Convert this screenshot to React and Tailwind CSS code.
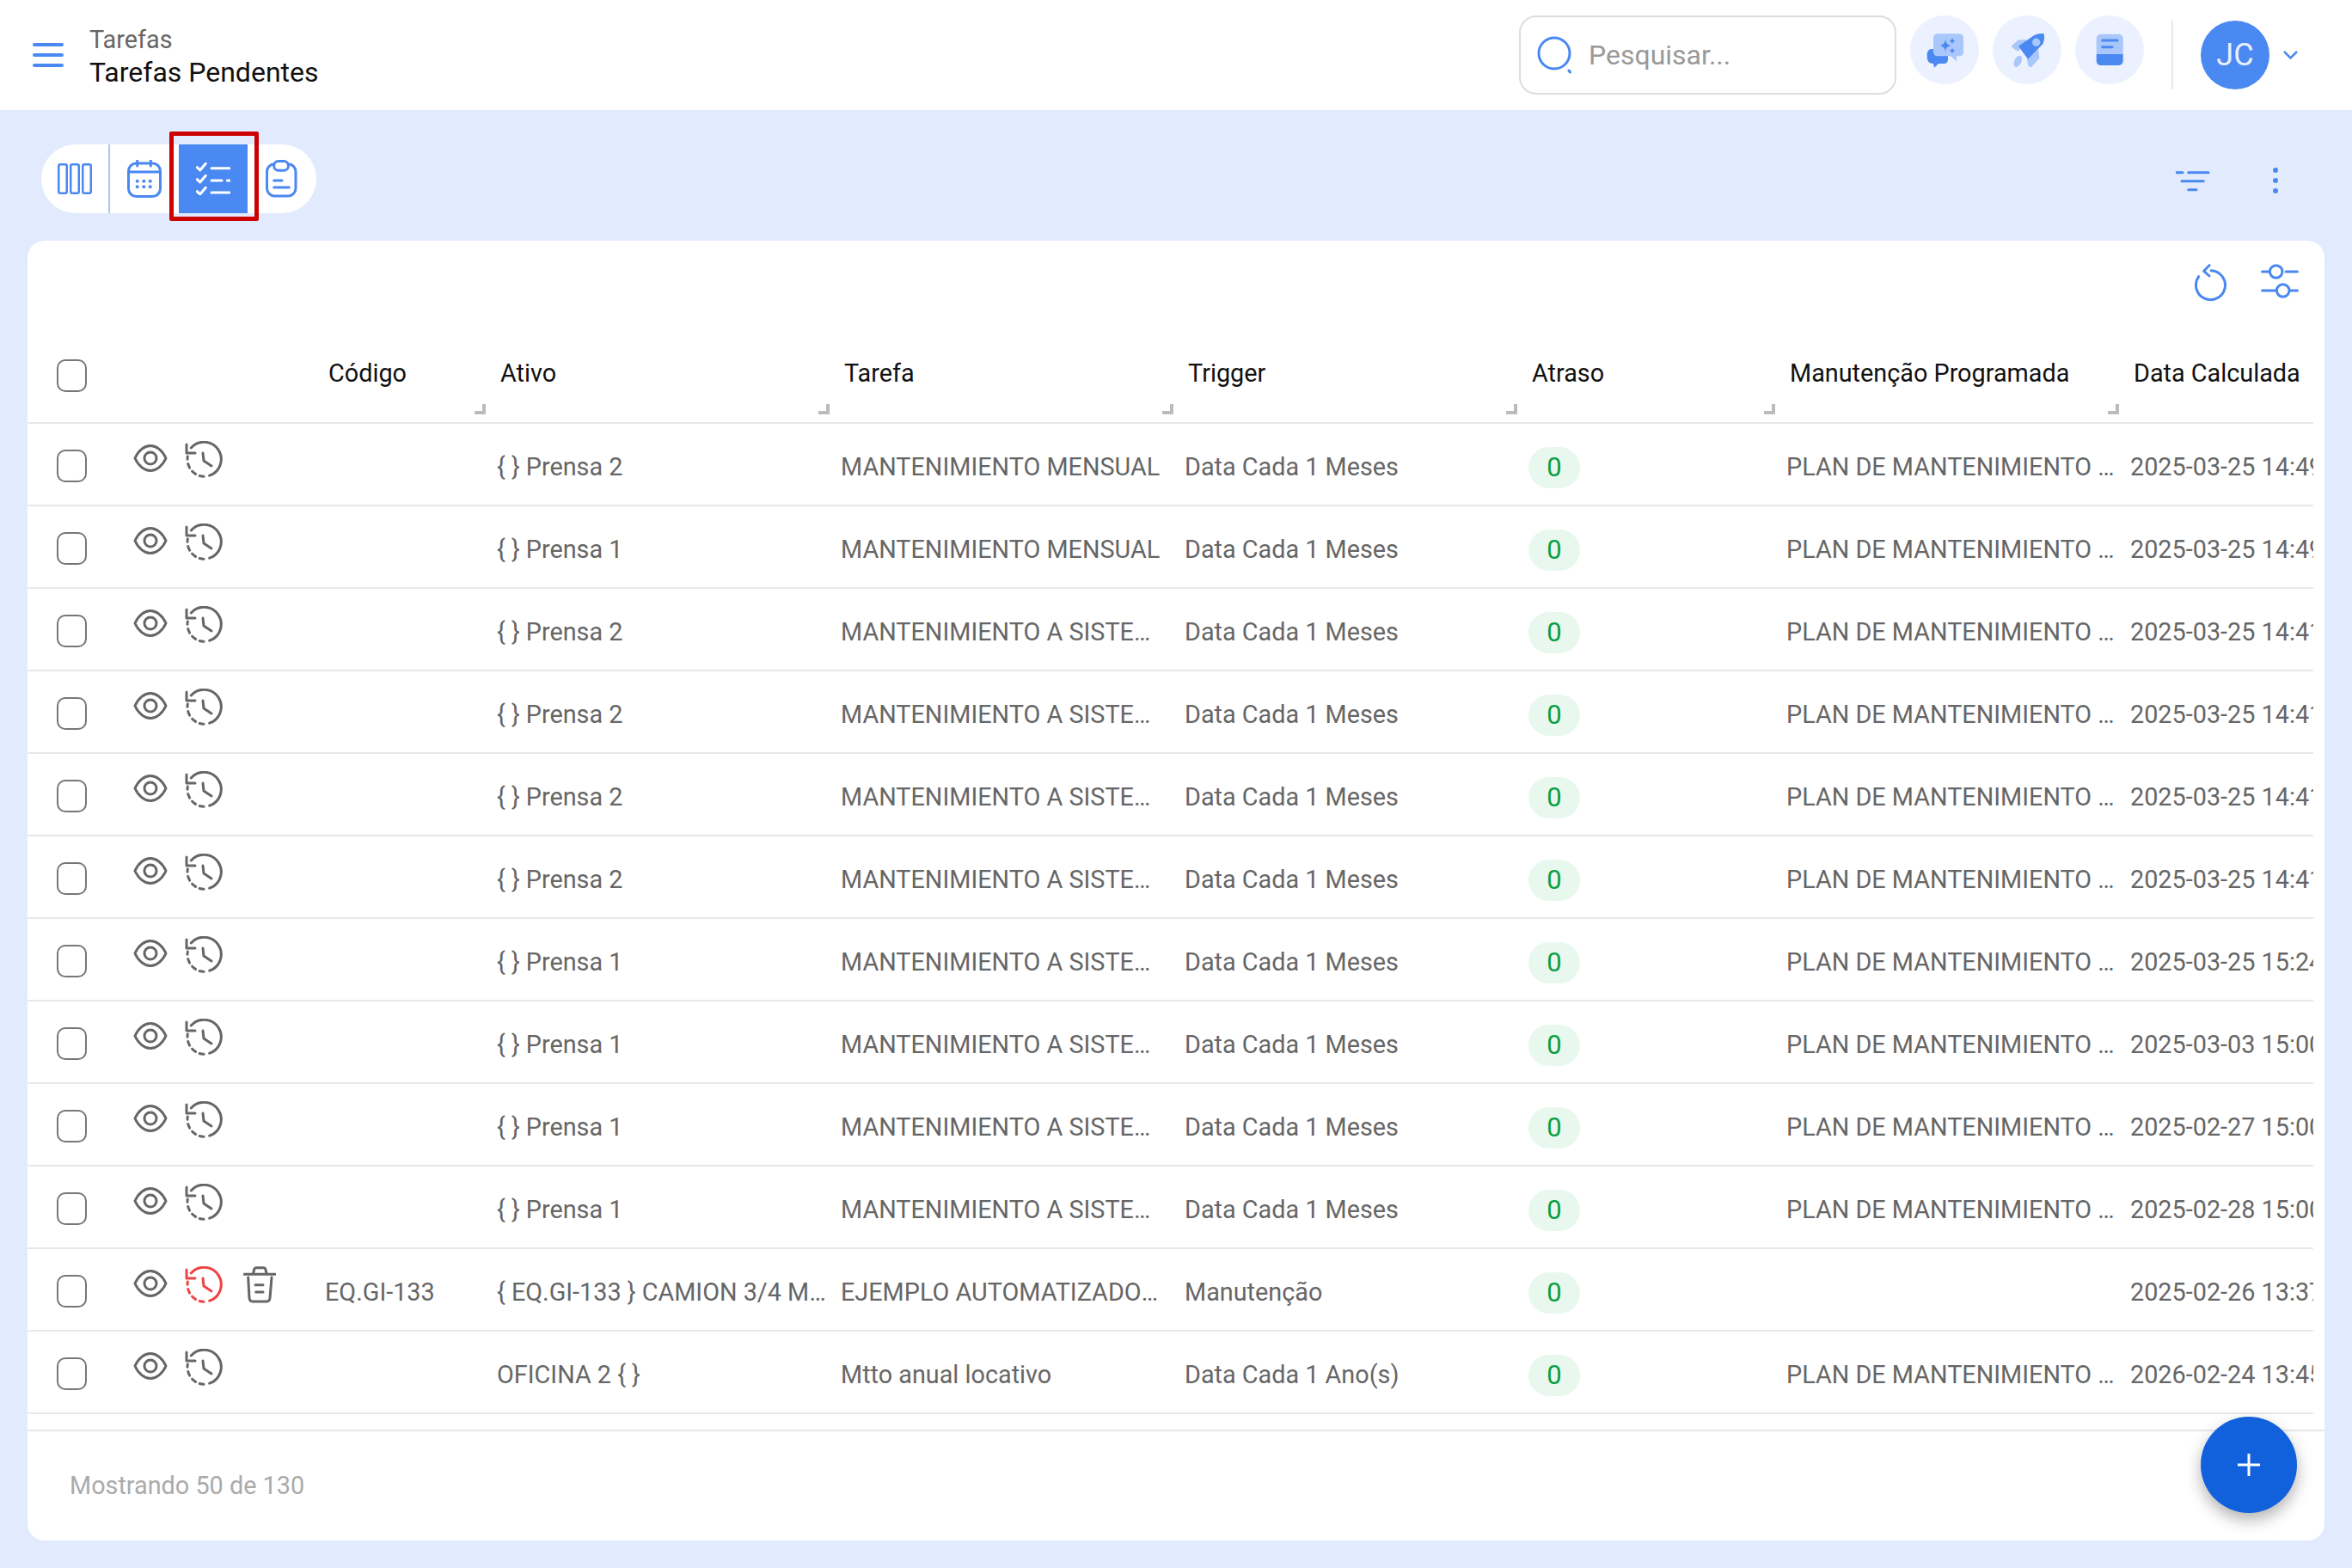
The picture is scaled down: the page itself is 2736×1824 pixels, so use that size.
import React from "react";

const rows = [
  { ativo: "{ } Prensa 2", tarefa: "MANTENIMIENTO MENSUAL", trigger: "Data Cada 1 Meses", plano: true, data: "2025-03-25 14:49:00" },
  { ativo: "{ } Prensa 1", tarefa: "MANTENIMIENTO MENSUAL", trigger: "Data Cada 1 Meses", plano: true, data: "2025-03-25 14:49:00" },
  { ativo: "{ } Prensa 2", tarefa: "MANTENIMIENTO A SISTEMA HIDRAULICO", trigger: "Data Cada 1 Meses", plano: true, data: "2025-03-25 14:41:00" },
  { ativo: "{ } Prensa 2", tarefa: "MANTENIMIENTO A SISTEMA HIDRAULICO", trigger: "Data Cada 1 Meses", plano: true, data: "2025-03-25 14:41:00" },
  { ativo: "{ } Prensa 2", tarefa: "MANTENIMIENTO A SISTEMA HIDRAULICO", trigger: "Data Cada 1 Meses", plano: true, data: "2025-03-25 14:41:00" },
  { ativo: "{ } Prensa 2", tarefa: "MANTENIMIENTO A SISTEMA HIDRAULICO", trigger: "Data Cada 1 Meses", plano: true, data: "2025-03-25 14:41:00" },
  { ativo: "{ } Prensa 1", tarefa: "MANTENIMIENTO A SISTEMA HIDRAULICO", trigger: "Data Cada 1 Meses", plano: true, data: "2025-03-25 15:24:00" },
  { ativo: "{ } Prensa 1", tarefa: "MANTENIMIENTO A SISTEMA HIDRAULICO", trigger: "Data Cada 1 Meses", plano: true, data: "2025-03-03 15:00:00" },
  { ativo: "{ } Prensa 1", tarefa: "MANTENIMIENTO A SISTEMA HIDRAULICO", trigger: "Data Cada 1 Meses", plano: true, data: "2025-02-27 15:00:00" },
  { ativo: "{ } Prensa 1", tarefa: "MANTENIMIENTO A SISTEMA HIDRAULICO", trigger: "Data Cada 1 Meses", plano: true, data: "2025-02-28 15:00:00" },
  { codigo: "EQ.GI-133", ativo: "{ EQ.GI-133 } CAMION 3/4 MARCA CHEVROLET", tarefa: "EJEMPLO AUTOMATIZADOS DE TAREAS", trigger: "Manutenção", plano: false, data: "2025-02-26 13:37:00", atrasada: true },
  { ativo: "OFICINA 2 { }", tarefa: "Mtto anual locativo", trigger: "Data Cada 1 Ano(s)", plano: true, data: "2026-02-24 13:45:00" },
];

const headers = [
  { label: "Código", w: "w-[200px]" },
  { label: "Ativo", w: "w-[400px]" },
  { label: "Tarefa", w: "w-[400px]" },
  { label: "Trigger", w: "w-[400px]" },
  { label: "Atraso", w: "w-[300px]" },
  { label: "Manutenção Programada", w: "w-[400px]" },
];

const MenuIcon = () => (
  <svg width="36" height="28" viewBox="0 0 36 28" fill="none" stroke="#4a88f2" strokeWidth="4" strokeLinecap="round">
    <path d="M2 2h32M2 14h32M2 26h32" />
  </svg>
);

const SearchIcon = () => (
  <svg width="44" height="44" viewBox="0 0 44 44" fill="none" stroke="#4a88f2" strokeWidth="3" strokeLinecap="round">
    <circle cx="20" cy="20" r="18" />
    <path d="M37 40l1.500 2" />
  </svg>
);

const ChatIcon = () => (
  <svg width="48" height="48" viewBox="0 0 48 48">
    <path d="M9 23h14c3 0 5 2 5 5v7c0 3-2 5-5 5h-6l-5 4.700-1-4.700C6 40 3.700 37 3.700 32v-3c0-3 2-6 5.300-6z" fill="#4a88f2" />
    <path d="M16 5.300h25c3 0 5 2 5 5v16c0 3-2 5-5 5h-3v5.700l-7-5.700H16c-3 0-5-2-5-5v-16c0-3 2-5 5-5z" fill="#a9c7fa" />
    <path d="M25 12c.8 4.500 2.500 6.200 7 7-4.500.8-6.200 2.500-7 7-.8-4.500-2.500-6.200-7-7 4.500-.8 6.200-2.500 7-7zM33 10c.4 2 1.500 3.100 3.500 3.700-2 .4-3.100 1.500-3.500 3.500-.4-2-1.500-3.100-3.500-3.500 2-.6 3.100-1.700 3.500-3.700zM33 21.500c.4 2 1.500 3.100 3.500 3.500-2 .4-3.100 1.500-3.500 3.500-.4-2-1.500-3.100-3.500-3.500 2-.4 3.100-1.500 3.500-3.500z" fill="#4a88f2" />
  </svg>
);

const RocketIcon = () => (
  <svg width="48" height="48" viewBox="0 0 48 48">
    <path d="M5.700 19.700 14 12.300h10L14 25.700c-3-1-6-3-8.300-6zM24 34.700l13.300-11.700 1 10.700L29 44c-2 .7-3.500-1-4-2.700z" fill="#a9c7fa" />
    <ellipse cx="13.300" cy="37.300" rx="4" ry="7" transform="rotate(25 13.300 37.300)" fill="#a9c7fa" />
    <path d="M32.300 7C37 5 41 4.800 43.500 5.200c1.200 4 .5 8-1.200 12.100L25 34.700 14 19.700z" fill="#4a88f2" />
    <circle cx="34.700" cy="15.300" r="4.700" fill="#a9c7fa" />
  </svg>
);

const BookIcon = () => (
  <svg width="48" height="48" viewBox="0 0 48 48">
    <path d="M14 5.700h20.500c3 0 5.200 2.200 5.200 5.200V29H8.700V11c0-3 2.300-5.300 5.300-5.300z" fill="#a9c7fa" />
    <path d="M8.700 29h31v7.800c0 3-2.200 5.200-5.200 5.200H14c-3 0-5.300-2.300-5.300-5.300z" fill="#4a88f2" />
    <path d="M15.700 13H33M15.700 20.700H27" stroke="#4a88f2" strokeWidth="3" strokeLinecap="round" />
  </svg>
);

const ColumnsIcon = () => (
  <svg width="40" height="36" viewBox="0 0 40 36" fill="none" stroke="#4a88f2" strokeWidth="2.500">
    <rect x="1.250" y="1.250" width="9.500" height="33.500" rx="2" />
    <rect x="15.250" y="1.250" width="9.500" height="33.500" rx="2" />
    <rect x="29.250" y="1.250" width="9.500" height="33.500" rx="2" />
  </svg>
);

const CalendarIcon = () => (
  <svg width="40" height="44" viewBox="0 0 40 44" fill="none" stroke="#4a88f2" strokeWidth="3" strokeLinecap="round">
    <rect x="1.500" y="4" width="37" height="38.500" rx="9" />
    <path d="M1.500 14h37M11.700 1v6M27.300 1v6" />
    <g fill="#4a88f2" stroke="none">
      <circle cx="11.700" cy="24.700" r="2" />
      <circle cx="19.300" cy="24.700" r="2" />
      <circle cx="26.700" cy="24.700" r="2" />
      <circle cx="11.700" cy="31.300" r="2" />
      <circle cx="19.300" cy="31.300" r="2" />
      <circle cx="26.700" cy="31.300" r="2" />
    </g>
  </svg>
);

const ChecklistIcon = () => (
  <svg width="40" height="38" viewBox="0 0 40 38" fill="none" stroke="#ffffff" strokeWidth="3" strokeLinecap="round" strokeLinejoin="round">
    <path d="M1.300 6.700 4.700 10l6.600-7.700M1.300 20.700 4.700 24l6.600-7.700M1.300 34.700 4.700 38l6.600-7.700" transform="translate(0 -1)" />
    <path d="M18 6.700h21M18 21h12M36.300 21H39M18 35h21" />
  </svg>
);

const ClipboardIcon = () => (
  <svg width="38" height="44" viewBox="0 0 38 44" fill="none" stroke="#4a88f2" strokeWidth="3" strokeLinecap="round">
    <rect x="1.500" y="4.700" width="33.500" height="37.300" rx="9" />
    <rect x="9.700" y="1.500" width="16.700" height="10.700" rx="5" fill="#ffffff" />
    <path d="M9.700 24H19M9.700 32h17.600" />
  </svg>
);

const FilterIcon = () => (
  <svg width="40" height="25" viewBox="0 0 40 25" fill="none" stroke="#4a88f2" strokeWidth="3" strokeLinecap="round">
    <path d="M1 2.700h7M14.700 2.700H38M7 12.700h25.300M14.700 22.700H24" />
  </svg>
);

const KebabIcon = () => (
  <svg width="6" height="30" viewBox="0 0 6 30" fill="#4a88f2">
    <circle cx="3" cy="3" r="3" />
    <circle cx="3" cy="15" r="3" />
    <circle cx="3" cy="27" r="3" />
  </svg>
);

const RefreshIcon = () => (
  <svg width="40" height="44" viewBox="0 0 40 44" fill="none" stroke="#4a88f2" strokeWidth="3" strokeLinecap="round" strokeLinejoin="round">
    <path d="M4.700 14.700A17 17 0 1 0 19 7.700" />
    <path d="M17 1.700 10.700 8.300 17 14" />
  </svg>
);

const SlidersIcon = () => (
  <svg width="44" height="40" viewBox="0 0 44 40" fill="none" stroke="#4a88f2" strokeWidth="3" strokeLinecap="round">
    <path d="M1.500 9H10M29 9h13.500M1.500 31H17M34 31h8.500" />
    <circle cx="17.700" cy="9" r="7.300" />
    <circle cx="25.700" cy="31" r="7.300" />
  </svg>
);

const EyeIcon = () => (
  <svg width="40" height="34" viewBox="0 0 40 34" fill="none" stroke="#666666" strokeWidth="3">
    <path d="M2 17C6 8 13 2.500 20 2.500S34 8 38 17C34 26 27 31.500 20 31.500S6 26 2 17Z" />
    <circle cx="20" cy="17" r="7" />
  </svg>
);

const HistoryIcon = ({ color }) => (
  <svg width="44" height="44" viewBox="0 0 44 44" fill="none" stroke={color} strokeWidth="3" strokeLinecap="round" strokeLinejoin="round">
    <path d="M7.300 8A20 20 0 1 1 28.700 40.200" />
    <path d="M22 41.300A20 20 0 0 1 3.300 18" strokeDasharray="5 5" />
    <path d="M2 4v10h10M21 14l1 9 9 6" />
  </svg>
);

const TrashIcon = () => (
  <svg width="38" height="44" viewBox="0 0 38 44" fill="none" stroke="#666666" strokeWidth="3" strokeLinecap="round" strokeLinejoin="round">
    <path d="M1.300 9.300h36M11.300 9.300l1.500-6c.3-1 1-1.500 2-1.500h9c1 0 1.700.5 2 1.500l1.500 6" />
    <path d="M5.700 13l1.300 24c.2 2.500 1.500 4 4 4h16c2.500 0 3.800-1.500 4-4L33 13" />
    <path d="M14 21.700h9M14.700 30H23" />
  </svg>
);

const Checkbox = ({ className = "" }) => (
  <div className={`w-[35px] h-[38px] rounded-[10px] border-2 border-[#777777] bg-white ${className}`} />
);

const Cell = ({ w, children }) => (
  <div className={`${w} shrink-0 px-[8px] pt-[5px] truncate`}>{children}</div>
);

const App = () => {
  return (
    <div className="w-[2736px] h-[1824px] flex flex-col bg-[#e2ebfd] font-[Roboto,sans-serif] overflow-hidden">
      <header className="h-[128px] shrink-0 bg-white flex items-center justify-between pl-[38px] pr-[63px]">
        <div className="flex items-center gap-[30px]">
          <MenuIcon />
          <div className="mt-[2px]">
            <p className="text-[28.800px] leading-[38px] text-[#666666]">Tarefas</p>
            <p className="text-[32px] leading-[38px] text-[#111111]">Tarefas Pendentes</p>
          </div>
        </div>
        <div className="flex items-center">
          <div className="w-[439px] h-[92px] rounded-[20px] border-2 border-[#dddddd] flex items-center gap-[16px] pl-[19px]">
            <SearchIcon />
            <span className="text-[32px] text-[#999999]">Pesquisar...</span>
          </div>
          <div className="flex gap-[16px] ml-[16px] mb-[12px]">
            <button className="w-[80px] h-[80px] rounded-full bg-[#ebf1fe] flex items-center justify-center"><ChatIcon /></button>
            <button className="w-[80px] h-[80px] rounded-full bg-[#ebf1fe] flex items-center justify-center"><RocketIcon /></button>
            <button className="w-[80px] h-[80px] rounded-full bg-[#ebf1fe] flex items-center justify-center"><BookIcon /></button>
          </div>
          <div className="w-[2px] h-[80px] bg-[#e8e8e8] ml-[32px] mr-[32px]" />
          <div className="w-[80px] h-[80px] rounded-full bg-[#4a88f2] flex items-center justify-center text-[36px] text-[#e8efff]">JC</div>
          <svg className="ml-[16px]" width="17" height="10" viewBox="0 0 17 10" fill="none" stroke="#4a88f2" strokeWidth="2.500">
            <path d="M1 1l7.500 7.500L16 1" />
          </svg>
        </div>
      </header>

      <div className="h-[152px] shrink-0 flex items-start justify-between pt-[40px] pl-[48px] pr-[86px]">
        <div className="relative flex h-[80px] w-[320px] rounded-full bg-white">
          <button className="w-[80px] flex items-center justify-center border-r-2 border-[#a9c7fa]"><ColumnsIcon /></button>
          <button className="w-[80px] flex items-center justify-center"><CalendarIcon /></button>
          <button className="w-[80px] flex items-center justify-center bg-[#4a88f2]"><ChecklistIcon /></button>
          <button className="w-[80px] flex items-center justify-center"><ClipboardIcon /></button>
          <div className="absolute left-[149px] top-[-15px] w-[104px] h-[104px] border-[5px] border-[#cc0000] rounded-[2px]" />
        </div>
        <div className="flex items-center h-[80px] gap-[73px] mt-[2px]">
          <FilterIcon />
          <KebabIcon />
        </div>
      </div>

      <main className="relative w-[2672px] h-[1512px] ml-[32px] shrink-0 bg-white rounded-[20px] flex flex-col overflow-hidden">
        <div className="h-[90px] shrink-0 flex items-start justify-end gap-[37px] pt-[27px] pr-[30px]">
          <RefreshIcon />
          <SlidersIcon />
        </div>

        <div className="w-[2659px] overflow-hidden shrink-0">
          <div className="w-[2840px]">
            <div className="flex h-[123px] border-b-2 border-[#e8e8e8] text-[28.800px] text-[#111111]">
              <div className="w-[338px] shrink-0 pl-[34px] pt-[48px]">
                <Checkbox />
              </div>
              {headers.map((h) => (
                <div key={h.label} className={`relative ${h.w} shrink-0 px-[12px] pt-[46px] leading-[36px]`}>
                  {h.label}
                  <span className="absolute right-[5px] bottom-[9px] w-[13px] h-[12px] border-r-[4px] border-b-[4px] border-[#bbbbbb]" />
                </div>
              ))}
              <div className="w-[400px] shrink-0 px-[12px] pt-[46px] leading-[36px]">Data Calculada</div>
            </div>

            {rows.map((r, i) => (
              <div key={i} className="flex h-[96px] border-b-2 border-[#e8e8e8] text-[28.800px] leading-[36px] text-[#666666] items-center">
                <div className="w-[104px] shrink-0 self-start pl-[34px] pt-[30px]">
                  <Checkbox />
                </div>
                <div className="w-[234px] shrink-0 self-start flex items-start pl-[19px] pt-[20px]">
                  <div className="mt-[3px] mr-[20px]"><EyeIcon /></div>
                  <div className="mr-[24px]">
                    <HistoryIcon color={r.atrasada ? "#ef4444" : "#666666"} />
                  </div>
                  {r.codigo && <TrashIcon />}
                </div>
                <Cell w="w-[200px]">{r.codigo}</Cell>
                <Cell w="w-[400px]">{r.ativo}</Cell>
                <Cell w="w-[400px]">{r.tarefa}</Cell>
                <Cell w="w-[400px]">{r.trigger}</Cell>
                <div className="w-[300px] shrink-0 px-[8px] pt-[7px]">
                  <span className="w-[60px] h-[48px] rounded-full bg-[#e8f8ee] text-[#0a9f45] text-[31px] flex items-center justify-center">0</span>
                </div>
                <Cell w="w-[400px]">{r.plano ? "PLAN DE MANTENIMIENTO PREVENTIVO" : ""}</Cell>
                <div className="w-[400px] shrink-0 px-[8px] pt-[5px] whitespace-nowrap">{r.data}</div>
              </div>
            ))}
          </div>
        </div>

        <footer className="flex-1 mt-[18px] border-t-2 border-[#e8e8e8] flex items-center pl-[49px] text-[28.800px] text-[#aaaaaa]">
          Mostrando 50 de 130
        </footer>

        <button className="absolute right-[32px] bottom-[32px] w-[112px] h-[112px] rounded-full bg-[#1160dc] shadow-[0_8px_18px_rgba(0,0,0,0.3)] flex items-center justify-center">
          <svg width="26" height="26" viewBox="0 0 26 26" fill="none" stroke="#ffffff" strokeWidth="3">
            <path d="M13 0v26M0 13h26" />
          </svg>
        </button>
      </main>
    </div>
  );
};

export default App;
